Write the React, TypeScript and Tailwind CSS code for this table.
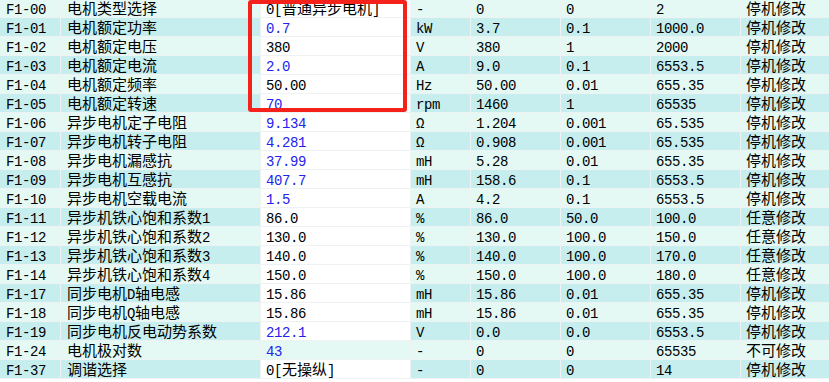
import React from "react"

type Row = {
    code: string
    name: string
    value: string
    blue?: boolean
    locked?: boolean
    unit: string
    def: string
    min: string
    max: string
    attr: string
}

const rows: Row[] = [
    { code: "F1-00", name: "电机类型选择", value: "0[普通异步电机]", unit: "-", def: "0", min: "0", max: "2", attr: "停机修改" },
    { code: "F1-01", name: "电机额定功率", value: "0.7", blue: true, unit: "kW", def: "3.7", min: "0.1", max: "1000.0", attr: "停机修改" },
    { code: "F1-02", name: "电机额定电压", value: "380", unit: "V", def: "380", min: "1", max: "2000", attr: "停机修改" },
    { code: "F1-03", name: "电机额定电流", value: "2.0", blue: true, unit: "A", def: "9.0", min: "0.1", max: "6553.5", attr: "停机修改" },
    { code: "F1-04", name: "电机额定频率", value: "50.00", unit: "Hz", def: "50.00", min: "0.01", max: "655.35", attr: "停机修改" },
    { code: "F1-05", name: "电机额定转速", value: "70", blue: true, unit: "rpm", def: "1460", min: "1", max: "65535", attr: "停机修改" },
    { code: "F1-06", name: "异步电机定子电阻", value: "9.134", blue: true, unit: "Ω", def: "1.204", min: "0.001", max: "65.535", attr: "停机修改" },
    { code: "F1-07", name: "异步电机转子电阻", value: "4.281", blue: true, unit: "Ω", def: "0.908", min: "0.001", max: "65.535", attr: "停机修改" },
    { code: "F1-08", name: "异步电机漏感抗", value: "37.99", blue: true, unit: "mH", def: "5.28", min: "0.01", max: "655.35", attr: "停机修改" },
    { code: "F1-09", name: "异步电机互感抗", value: "407.7", blue: true, unit: "mH", def: "158.6", min: "0.1", max: "6553.5", attr: "停机修改" },
    { code: "F1-10", name: "异步电机空载电流", value: "1.5", blue: true, unit: "A", def: "4.2", min: "0.1", max: "6553.5", attr: "停机修改" },
    { code: "F1-11", name: "异步机铁心饱和系数1", value: "86.0", unit: "%", def: "86.0", min: "50.0", max: "100.0", attr: "任意修改" },
    { code: "F1-12", name: "异步机铁心饱和系数2", value: "130.0", unit: "%", def: "130.0", min: "100.0", max: "150.0", attr: "任意修改" },
    { code: "F1-13", name: "异步机铁心饱和系数3", value: "140.0", unit: "%", def: "140.0", min: "100.0", max: "170.0", attr: "任意修改" },
    { code: "F1-14", name: "异步机铁心饱和系数4", value: "150.0", unit: "%", def: "150.0", min: "100.0", max: "180.0", attr: "任意修改" },
    { code: "F1-17", name: "同步电机D轴电感", value: "15.86", unit: "mH", def: "15.86", min: "0.01", max: "655.35", attr: "停机修改" },
    { code: "F1-18", name: "同步电机Q轴电感", value: "15.86", unit: "mH", def: "15.86", min: "0.01", max: "655.35", attr: "停机修改" },
    { code: "F1-19", name: "同步电机反电动势系数", value: "212.1", blue: true, unit: "V", def: "0.0", min: "0.0", max: "6553.5", attr: "停机修改" },
    { code: "F1-24", name: "电机极对数", value: "43", blue: true, locked: true, unit: "-", def: "0", min: "0", max: "65535", attr: "不可修改" },
    { code: "F1-37", name: "调谐选择", value: "0[无操纵]", unit: "-", def: "0", min: "0", max: "14", attr: "停机修改" },
]

// CJK runs get the wider CJK face, everything else the mono face
const Txt = ({ text }: { text: string }) => {
    const parts = text.split(/([\u4e00-\u9fff]+)/).filter(p => p !== "")
    return (
        <span className="leading-[18px]">
            {parts.map((p, i) =>
                /[\u4e00-\u9fff]/.test(p)
                    ? <span key={i} className="font-['Noto_Sans_CJK_SC',sans-serif] text-[15px] leading-[18px] align-baseline">{p}</span>
                    : <span key={i} className="font-['Liberation_Mono',monospace] text-[14px] tracking-[-0.4px] leading-[18px] align-baseline">{p}</span>
            )}
        </span>
    )
}

const Cell = ({ children, className = "" }: { children: React.ReactNode, className?: string }) => (
    <div className={`h-[18px] pl-[5px] border-r border-[#eef2f2] whitespace-nowrap overflow-hidden leading-[18px] ${className}`}>
        {children}
    </div>
)

const App = () => {
    return (
        <div className="relative w-[829px] h-[382px] overflow-hidden bg-white text-black">
            <div className="-mt-px">
                {rows.map((r, i) => (
                    <div
                        key={r.code}
                        className={`grid grid-cols-[61px_200px_150px_60px_90px_90px_90px_89px] border-b border-[#eef2f2] ${i % 2 === 0 ? "bg-[#e4f9f3]" : "bg-[#c7eeee]"}`}
                    >
                        <Cell className="pl-[6px]"><Txt text={r.code} /></Cell>
                        <Cell className="pl-[6px]"><Txt text={r.name} /></Cell>
                        <Cell className={`${r.locked ? "" : "bg-white"} ${r.blue ? "text-[#2222ee]" : ""}`}><Txt text={r.value} /></Cell>
                        <Cell className="pl-[4px]"><Txt text={r.unit} /></Cell>
                        <Cell><Txt text={r.def} /></Cell>
                        <Cell><Txt text={r.min} /></Cell>
                        <Cell><Txt text={r.max} /></Cell>
                        <Cell><Txt text={r.attr} /></Cell>
                    </div>
                ))}
            </div>
            {/* annotation box drawn over the value column */}
            <div className="absolute left-[248px] top-0 w-[159px] h-[112px] border-4 border-[#f5221b] rounded-[3px] pointer-events-none" />
        </div>
    )
}

export default App
